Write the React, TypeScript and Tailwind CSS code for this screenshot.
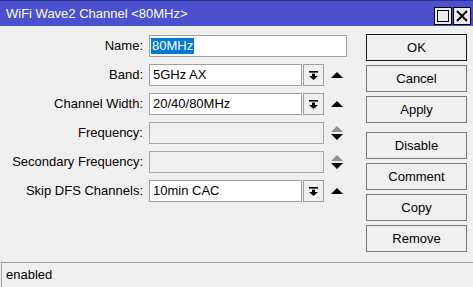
import React from 'react'

const font = { fontFamily: '"Liberation Sans", Arial, sans-serif' }

// 下拉按钮图标
const DropIcon = () => (
  <svg width="9" height="9" viewBox="0 0 9 9">
    <rect x="0" y="0" width="9" height="1.6" fill="#000" />
    <rect x="3" y="2.6" width="3" height="2.6" fill="#000" />
    <polygon points="0,5 9,5 4.5,9" fill="#000" />
  </svg>
)

const UpArrow = ({ color = '#000' }: { color?: string }) => (
  <svg width="12" height="6" viewBox="0 0 12 6">
    <polygon points="0,6 12,6 6,0" fill={color} />
  </svg>
)

const DownArrow = () => (
  <svg width="12" height="6" viewBox="0 0 12 6">
    <polygon points="0,0 12,0 6,6" fill="#000" />
  </svg>
)

const SelectField = ({ value }: { value: string }) => (
  <div className="flex items-center">
    <div className="w-[153px] h-[22px] bg-white border border-[#a0a0a0] flex items-center pl-[3px] text-[13px] text-black">
      {value}
    </div>
    <div className="ml-[1px] w-[21px] h-[22px] bg-[#f0f0f0] border border-[#a0a0a0] flex items-center justify-center">
      <DropIcon />
    </div>
    <div className="ml-[7px] flex items-center">
      <UpArrow />
    </div>
  </div>
)

const DisabledField = () => (
  <div className="flex items-center">
    <div className="w-[175px] h-[22px] bg-[#f0f0f0] border border-[#a8a8a8]" />
    <div className="ml-[7px] flex flex-col gap-[2px]">
      <UpArrow color="#8c918c" />
      <DownArrow />
    </div>
  </div>
)

const labels = ['Name:', 'Band:', 'Channel Width:', 'Frequency:', 'Secondary Frequency:', 'Skip DFS Channels:']

const Btn = ({ children, primary = false, className = '' }: { children: React.ReactNode; primary?: boolean; className?: string }) => (
  <div
    className={
      'w-[101px] h-[27px] flex items-center justify-center text-[13px] text-black bg-[#f0f0f0] border ' +
      (primary ? 'border-[#1a1a1a] ' : 'border-[#7a7a7a] ') +
      className
    }
  >
    {children}
  </div>
)

export default function App() {
  return (
    <div className="w-[473px] h-[287px] bg-[#f0f0f0] flex flex-col overflow-hidden" style={font}>
      {/* 标题栏 */}
      <div className="h-[26px] bg-[#4b50ce] border-t border-[#2c2f8a] flex items-center justify-between pl-[6px] pr-[2px]">
        <span className="text-white text-[13px] leading-none">WiFi Wave2 Channel &lt;80MHz&gt;</span>
        <div className="flex items-center gap-[1px] mt-[5px]">
          <div className="w-[18px] h-[18px] bg-[#ececec] border border-black flex items-center justify-center">
            <div className="w-[12px] h-[12px] border border-black" />
          </div>
          <div className="w-[18px] h-[18px] bg-[#ececec] border border-black flex items-center justify-center">
            <svg width="12" height="12" viewBox="0 0 12 12">
              <path d="M1 1 L11 11 M11 1 L1 11" stroke="#000" strokeWidth="2" />
            </svg>
          </div>
        </div>
      </div>

      {/* 主体 */}
      <div className="flex-1 flex">
        <div className="w-[366px] pt-[9px]">
          <div className="grid grid-cols-[143px_auto] gap-x-[6px] gap-y-[7px] items-center">
            {labels.map((l, i) => (
              <React.Fragment key={l}>
                <div className="text-right text-[13px] text-black h-[22px] leading-[22px] whitespace-nowrap">{l}</div>
                {i === 0 && (
                  <div className="w-[198px] h-[22px] bg-white border border-[#a0a0a0] flex items-center pl-[1px] text-[13px]">
                    <span className="bg-[#0078d7] text-white leading-[16px] px-[1px]">80MHz</span>
                  </div>
                )}
                {i === 1 && <SelectField value="5GHz AX" />}
                {i === 2 && <SelectField value="20/40/80MHz" />}
                {(i === 3 || i === 4) && <DisabledField />}
                {i === 5 && <SelectField value="10min CAC" />}
              </React.Fragment>
            ))}
          </div>
        </div>
        <div className="pt-[8px] flex flex-col gap-[4px]">
          <Btn primary>OK</Btn>
          <Btn>Cancel</Btn>
          <Btn>Apply</Btn>
          <Btn className="mt-[5px]">Disable</Btn>
          <Btn>Comment</Btn>
          <Btn>Copy</Btn>
          <Btn>Remove</Btn>
        </div>
      </div>

      {/* 状态栏 */}
      <div className="h-[25px] border-t border-l border-[#a0a0a0] ml-[1px] flex items-center pl-[4px] text-[13px] text-black">
        enabled
      </div>
    </div>
  )
}
